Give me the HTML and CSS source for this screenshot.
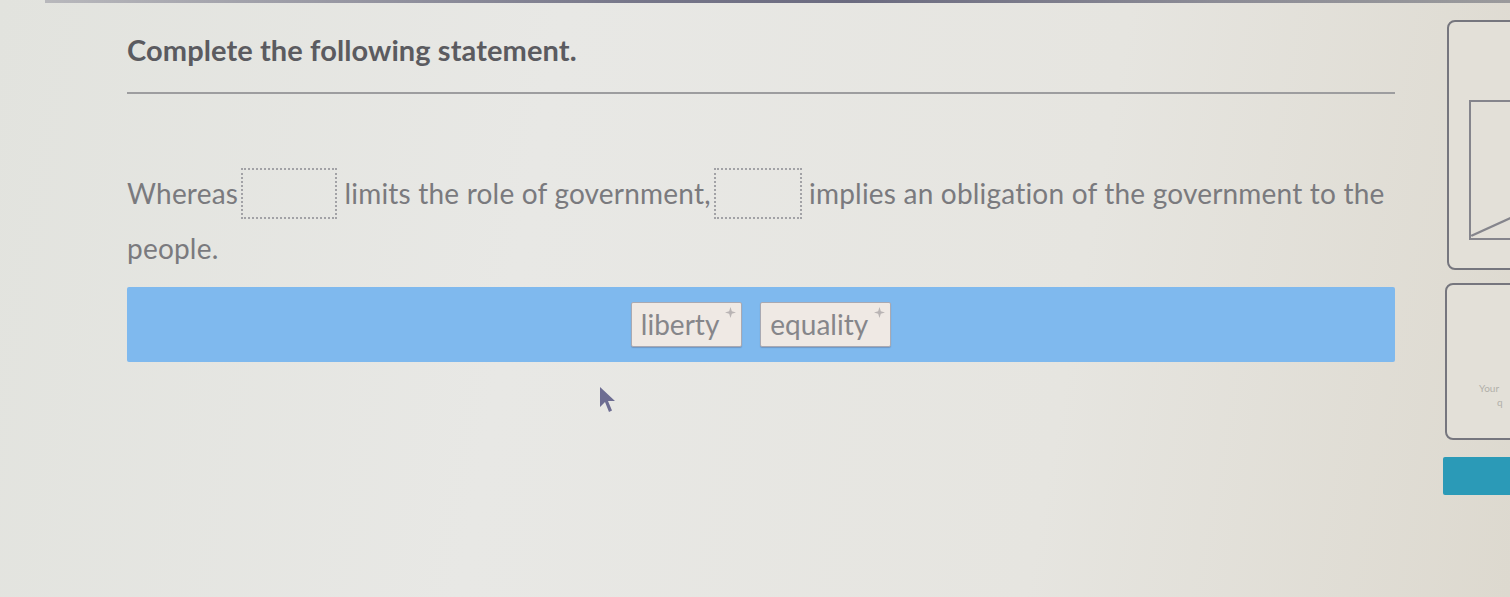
FILE: index.html
```html
<!DOCTYPE html>
<html lang="en">
<head>
<meta charset="utf-8">
<title>Complete the following statement</title>
<link rel="stylesheet" href="styles.css">
</head>
<body>
<div class="topbar"></div>
<div class="page">
  <main class="main">
    <h1 class="title">Complete the following statement.</h1>
    <div class="rule"></div>
    <p class="sentence">Whereas<span class="blank b1"></span> limits the role of government,<span class="blank b2"></span> implies an obligation of the government to the people.</p>
    <div class="bank">
      <span class="chip">liberty<svg class="grip" viewBox="0 0 10 10"><path d="M5 0 L6.2 3.8 L10 5 L6.2 6.2 L5 10 L3.8 6.2 L0 5 L3.8 3.8 Z"/></svg></span>
      <span class="chip">equality<svg class="grip" viewBox="0 0 10 10"><path d="M5 0 L6.2 3.8 L10 5 L6.2 6.2 L5 10 L3.8 6.2 L0 5 L3.8 3.8 Z"/></svg></span>
    </div>
  </main>
  <aside class="side">
    <div class="card card1">
      <div class="thumb">
        <svg class="thumb-line" viewBox="0 0 40 40" preserveAspectRatio="none"><path d="M0 38 L40 8"/></svg>
      </div>
    </div>
    <div class="card card2">
      <span class="tiny">Your</span>
      <span class="tiny t2">q</span>
    </div>
    <div class="btn"></div>
  </aside>
</div>
<svg class="cursor" viewBox="0 0 20 30"><path d="M2 2 L2 22 L7 17 L11 27 L14 25.5 L10 16 L17 16 Z"/></svg>
</body>
</html>
```

FILE: styles.css
```css
html, body {
  margin: 0;
  padding: 0;
}
body {
  width: 1510px;
  height: 597px;
  overflow: hidden;
  position: relative;
  background: linear-gradient(100deg, #e2e3de 0%, #e8e8e5 35%, #e6e5e0 70%, #ddd9cf 100%);
  font-family: "Lato", "Open Sans", sans-serif;
}
.topbar {
  height: 3px;
  margin-left: 45px;
  background: linear-gradient(90deg, #b8b8bc 0%, #77778a 40%, #6b6b80 55%, #8c8c96 80%, #9a9a9c 100%);
}
.page {
  display: flex;
}
.main {
  width: 1268px;
  flex-shrink: 0;
  margin-left: 127px;
  padding-top: 27px;
}
.title {
  margin: 0;
  font-size: 29px;
  line-height: 40px;
  font-weight: 700;
  color: #5b5b60;
  letter-spacing: 0.1px;
}
.rule {
  margin-top: 22px;
  height: 2px;
  background: #9d9d9f;
}
.sentence {
  margin: 73px 0 0 0;
  font-size: 28px;
  line-height: 52px;
  color: #7a7a7e;
  letter-spacing: 0.2px;
}
.blank {
  display: inline-block;
  vertical-align: middle;
  height: 47px;
  border: 2px dotted #a2a2a6;
  margin: 0 0 0 3px;
  position: relative;
  top: -3px;
}
.b1 { width: 92px; }
.b2 { width: 84px; }
.bank {
  margin-top: 13px;
  height: 75px;
  background: #7fb9ee;
  border-radius: 2px;
  display: flex;
  justify-content: center;
  align-items: center;
  gap: 18px;
}
.chip {
  position: relative;
  height: 43px;
  line-height: 43px;
  padding: 0 22px 0 9px;
  background: #efe9e4;
  border: 1px solid #a9a9b2;
  border-radius: 2px;
  font-size: 28px;
  color: #86868a;
  box-shadow: 0 1px 1px rgba(80, 90, 120, 0.35);
}
.grip {
  position: absolute;
  top: 4px;
  right: 5px;
  width: 11px;
  height: 11px;
  fill: #b9b4b4;
}
.side {
  margin-left: 50px;
  width: 100px;
  flex-shrink: 0;
  display: flex;
  flex-direction: column;
  padding-top: 17px;
}
.card {
  border: 2px solid #76767e;
  border-radius: 8px;
  background: #e3e0d8;
}
.card1 {
  height: 250px;
  margin-left: 2px;
  display: flex;
  align-items: flex-start;
  padding-top: 78px;
  box-sizing: border-box;
}
.thumb {
  margin-left: 20px;
  width: 70px;
  height: 140px;
  border: 2px solid #85858c;
  position: relative;
  box-sizing: border-box;
}
.thumb-line {
  position: absolute;
  left: 0;
  bottom: 0;
  width: 100%;
  height: 40px;
  fill: none;
  stroke: #85858c;
  stroke-width: 2;
}
.card2 {
  margin-top: 13px;
  height: 157px;
  box-sizing: border-box;
  display: flex;
  flex-direction: column;
  align-items: flex-start;
  padding: 96px 0 0 32px;
}
.tiny {
  font-size: 10px;
  line-height: 14px;
  color: #b2b0aa;
}
.t2 { margin-left: 18px; }
.btn {
  margin-top: 17px;
  margin-left: -2px;
  height: 38px;
  background: #2b9ab7;
  border-radius: 2px;
}
.cursor {
  position: absolute;
  left: 598px;
  top: 385px;
  width: 20px;
  height: 30px;
  fill: #6d6d92;
}
```
